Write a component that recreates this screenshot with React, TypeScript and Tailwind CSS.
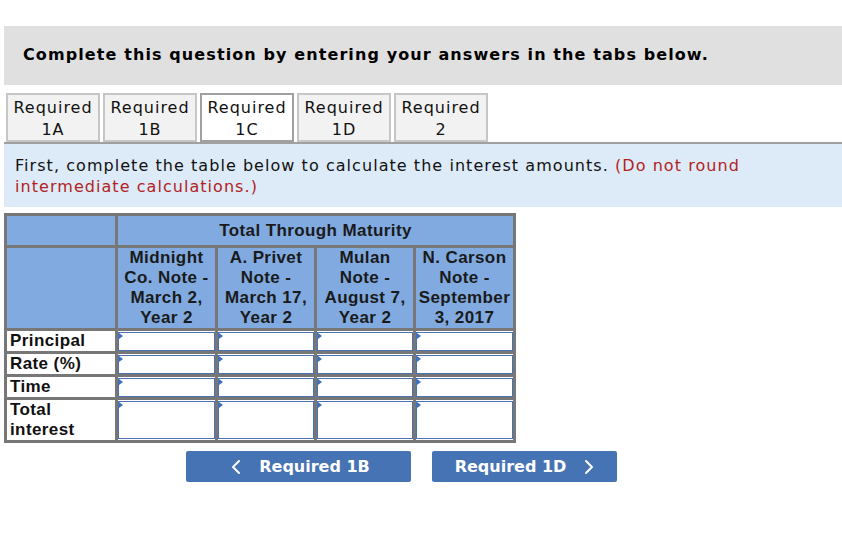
import React from "react";

const V = { fontFamily: '"DejaVu Sans", Verdana, sans-serif' };
const A = { fontFamily: '"Liberation Sans", Arial, sans-serif' };

function Tab({ a, b, active }: { a: string; b: string; active?: boolean }) {
  return (
    <div
      className={
        "w-[94px] h-[49px] flex flex-col items-center justify-center border-2 text-[16px] leading-[22px] tracking-[1px] text-[#111] " +
        (active ? "bg-white border-[#a0a0a0]" : "bg-[#f2f2f2] border-[#c6c6c6]")
      }
      style={V}
    >
      <div className="mt-[2px]">{a}</div>
      <div>{b}</div>
    </div>
  );
}

function InputCell({ h }: { h: number }) {
  return (
    <td className="border-[3px] border-[#777] p-0 bg-white">
      <div className="relative border border-[#4a72b2] bg-white" style={{ height: h }}>
        <div className="absolute left-0 top-0 w-0 h-0 border-t-[3px] border-b-[3px] border-l-[4px] border-t-transparent border-b-transparent border-l-[#3d6fc0]" />
      </div>
    </td>
  );
}

function Row({ label, h }: { label: React.ReactNode; h: number }) {
  return (
    <tr>
      <td className="border-[3px] border-[#777] bg-white px-[3px] py-0 text-[17px] leading-[20px] tracking-[0.4px] font-bold text-[#111] align-middle">
        {label}
      </td>
      <InputCell h={h} />
      <InputCell h={h} />
      <InputCell h={h} />
      <InputCell h={h} />
    </tr>
  );
}

export default function App() {
  const th =
    "border-[3px] border-[#777] bg-[#80aae0] text-[17px] leading-[20px] tracking-[0.4px] font-bold text-[#1a1a1a] text-center p-0";
  return (
    <div className="w-[842px] h-[538px] bg-white overflow-hidden relative">
      <div className="pt-[26px] pl-[4px]">
        <div className="h-[59px] bg-[#e0e0e0] flex items-center pl-[19px]">
          <span className="text-[16px] font-bold tracking-[1.1px] text-black -mt-[2px]" style={V}>
            Complete this question by entering your answers in the tabs below.
          </span>
        </div>

        <div className="mt-[8px] flex gap-[3px] pl-[2px]">
          <Tab a="Required" b="1A" />
          <Tab a="Required" b="1B" />
          <Tab a="Required" b="1C" active />
          <Tab a="Required" b="1D" />
          <Tab a="Required" b="2" />
        </div>

        <div className="h-[2px] bg-[#a0a0a0]" />
        <div
          className="h-[63px] bg-[#ddebf8] pl-[11px] pr-[80px] pt-[11px] text-[16px] leading-[21px] tracking-[1.05px] text-[#111]"
          style={V}
        >
          First, complete the table below to calculate the interest amounts.{" "}
          <span className="text-[#b22222]">(Do not round intermediate calculations.)</span>
        </div>

        <table className="mt-[6px] border-collapse border-[3px] border-[#777]" style={A}>
          <colgroup>
            <col style={{ width: 111 }} />
            <col style={{ width: 100 }} />
            <col style={{ width: 99 }} />
            <col style={{ width: 99 }} />
            <col style={{ width: 100 }} />
          </colgroup>
          <tbody>
            <tr className="h-[32px]">
              <td className={th}></td>
              <td className={th} colSpan={4}>
                Total Through Maturity
              </td>
            </tr>
            <tr className="h-[80px]">
              <td className={th}></td>
              <td className={th}>
                Midnight
                <br />
                Co. Note -
                <br />
                March 2,
                <br />
                Year 2
              </td>
              <td className={th}>
                A. Privet
                <br />
                Note -
                <br />
                March 17,
                <br />
                Year 2
              </td>
              <td className={th}>
                Mulan
                <br />
                Note -
                <br />
                August 7,
                <br />
                Year 2
              </td>
              <td className={th}>
                N. Carson
                <br />
                Note -
                <br />
                September
                <br />
                3, 2017
              </td>
            </tr>
            <Row label="Principal" h={19} />
            <Row label="Rate (%)" h={19} />
            <Row label="Time" h={19} />
            <Row
              label={
                <>
                  Total
                  <br />
                  interest
                </>
              }
              h={38}
            />
          </tbody>
        </table>

        <div className="mt-[8px] flex gap-[21px] pl-[182px]">
          <button
            className="w-[225px] h-[31px] rounded-[2px] bg-[#4673b3] text-white text-[16px] font-bold flex items-center justify-center gap-[18px] pl-[4px]"
            style={V}
          >
            <svg width="10" height="16" viewBox="0 0 10 16" fill="none" stroke="white" strokeWidth="2" strokeLinecap="round" strokeLinejoin="round">
              <path d="M8 2 L2 8 L8 14" />
            </svg>
            <span>Required 1B</span>
          </button>
          <button
            className="w-[185px] h-[31px] rounded-[2px] bg-[#4673b3] text-white text-[16px] font-bold flex items-center justify-center gap-[18px]"
            style={V}
          >
            <span>Required 1D</span>
            <svg width="10" height="16" viewBox="0 0 10 16" fill="none" stroke="white" strokeWidth="2" strokeLinecap="round" strokeLinejoin="round">
              <path d="M2 2 L8 8 L2 14" />
            </svg>
          </button>
        </div>
      </div>
    </div>
  );
}
